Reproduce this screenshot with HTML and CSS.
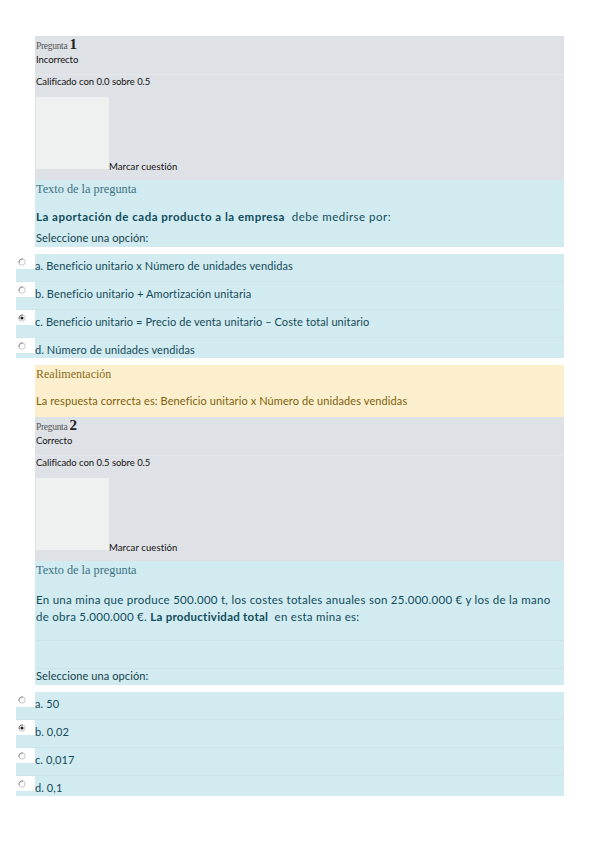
FILE: index.html
```html
<!DOCTYPE html>
<html lang="es">
<head>
<meta charset="utf-8">
<title>Cuestionario</title>
<link rel="stylesheet" href="styles.css">
</head>
<body>
<div class="page">

  <section class="info">
    <div class="qno"><span class="lbl">Pregunta</span> <span class="num">1</span></div>
    <div class="state">Incorrecto</div>
    <div class="grade">Calificado con 0.0 sobre 0.5</div>
    <div class="flag"><div class="flagbox"></div><span class="flagtxt">Marcar cuestión</span></div>
  </section>
  <section class="qtext">
    <div class="qlabel">Texto de la pregunta</div>
    <p class="question q1"><b>La aportación de cada producto a la empresa</b>&nbsp; debe medirse por:</p>
    <div class="prompt">Seleccione una opción:</div>
  </section>
  <section class="answers">
    <div class="opt"><span class="rcell"><svg class="radio" viewBox="0 0 8 8"><circle cx="4" cy="4" r="3.2" fill="#fff" stroke="#b8b8b8" stroke-width="0.8"/><path d="M1.2 5 A3.2 3.2 0 0 1 5 1.1" fill="none" stroke="#777" stroke-width="0.8"/></svg></span><span class="otext">a. Beneficio unitario x Número de unidades vendidas</span></div>
    <div class="opt"><span class="rcell"><svg class="radio" viewBox="0 0 8 8"><circle cx="4" cy="4" r="3.2" fill="#fff" stroke="#b8b8b8" stroke-width="0.8"/><path d="M1.2 5 A3.2 3.2 0 0 1 5 1.1" fill="none" stroke="#777" stroke-width="0.8"/></svg></span><span class="otext">b. Beneficio unitario + Amortización unitaria</span></div>
    <div class="opt"><span class="rcell"><svg class="radio" viewBox="0 0 8 8"><circle cx="4" cy="4" r="3.2" fill="#fff" stroke="#b8b8b8" stroke-width="0.8"/><path d="M1.2 5 A3.2 3.2 0 0 1 5 1.1" fill="none" stroke="#555" stroke-width="0.8"/><circle cx="4" cy="4" r="1.6" fill="#222"/></svg></span><span class="otext">c. Beneficio unitario = Precio de venta unitario – Coste total unitario</span></div>
    <div class="opt"><span class="rcell"><svg class="radio" viewBox="0 0 8 8"><circle cx="4" cy="4" r="3.2" fill="#fff" stroke="#b8b8b8" stroke-width="0.8"/><path d="M1.2 5 A3.2 3.2 0 0 1 5 1.1" fill="none" stroke="#777" stroke-width="0.8"/></svg></span><span class="otext">d. Número de unidades vendidas</span></div>
  </section>
  <section class="feedback">
    <div class="fblabel">Realimentación</div>
    <p class="fbtext">La respuesta correcta es: Beneficio unitario x Número de unidades vendidas</p>
  </section>

  <section class="info">
    <div class="qno"><span class="lbl">Pregunta</span> <span class="num">2</span></div>
    <div class="state">Correcto</div>
    <div class="grade">Calificado con 0.5 sobre 0.5</div>
    <div class="flag"><div class="flagbox"></div><span class="flagtxt">Marcar cuestión</span></div>
  </section>
  <section class="qtext">
    <div class="qlabel">Texto de la pregunta</div>
    <p class="question q2">En una mina que produce 500.000 t, los costes totales anuales son 25.000.000 € y los de la mano de obra 5.000.000 €. <b>La productividad total</b>&nbsp; en esta mina es:</p>
    <div class="spacer"></div>
    <div class="spacer2"></div>
    <div class="prompt">Seleccione una opción:</div>
  </section>
  <section class="answers">
    <div class="opt"><span class="rcell"><svg class="radio" viewBox="0 0 8 8"><circle cx="4" cy="4" r="3.2" fill="#fff" stroke="#b8b8b8" stroke-width="0.8"/><path d="M1.2 5 A3.2 3.2 0 0 1 5 1.1" fill="none" stroke="#777" stroke-width="0.8"/></svg></span><span class="otext">a. 50</span></div>
    <div class="opt"><span class="rcell"><svg class="radio" viewBox="0 0 8 8"><circle cx="4" cy="4" r="3.2" fill="#fff" stroke="#b8b8b8" stroke-width="0.8"/><path d="M1.2 5 A3.2 3.2 0 0 1 5 1.1" fill="none" stroke="#555" stroke-width="0.8"/><circle cx="4" cy="4" r="1.6" fill="#222"/></svg></span><span class="otext">b. 0,02</span></div>
    <div class="opt"><span class="rcell"><svg class="radio" viewBox="0 0 8 8"><circle cx="4" cy="4" r="3.2" fill="#fff" stroke="#b8b8b8" stroke-width="0.8"/><path d="M1.2 5 A3.2 3.2 0 0 1 5 1.1" fill="none" stroke="#777" stroke-width="0.8"/></svg></span><span class="otext">c. 0,017</span></div>
    <div class="opt"><span class="rcell"><svg class="radio" viewBox="0 0 8 8"><circle cx="4" cy="4" r="3.2" fill="#fff" stroke="#b8b8b8" stroke-width="0.8"/><path d="M1.2 5 A3.2 3.2 0 0 1 5 1.1" fill="none" stroke="#777" stroke-width="0.8"/></svg></span><span class="otext">d. 0,1</span></div>
  </section>

</div>
</body>
</html>
```

FILE: styles.css
```css
* { box-sizing: border-box; }
html, body { margin: 0; padding: 0; background: #ffffff; }
body { font-family: "Lato", "Open Sans", sans-serif; color: #111; }
p { margin: 0; }

.page { padding-top: 36px; }

.info {
  margin-left: 35px;
  width: 529px;
  background: #dee1e5;
  padding: 0 0 11px 1px;
}
.qno { height: 16px; line-height: 16px; font-family: "Liberation Serif", serif; color: #555; }
.qno .lbl { font-size: 9.5px; letter-spacing: -0.3px; }
.qno .num { font-size: 15px; font-weight: bold; color: #222; margin-left: -2px; }
.state { line-height: 14px; font-size: 9.5px; letter-spacing: -0.05px; border-bottom: 1px solid #e3e6ea; height: 23px; padding-top: 1px; }
.grade { font-size: 9.5px; line-height: 14px; letter-spacing: -0.05px; }
.flag { display: flex; align-items: flex-end; margin-top: 8px; }
.flagbox { width: 73px; height: 72px; background: #eff0f0; }
.flagtxt { font-size: 9.5px; line-height: 10px; letter-spacing: 0.1px; margin-bottom: -3px; }

.qtext {
  margin-left: 35px;
  width: 529px;
  background: #d2ebf0;
  padding: 1px 0 2px 1px;
  color: #0f4b5b;
}
.qlabel { font-family: "Liberation Serif", serif; font-size: 12.3px; line-height: 16px; color: #3a7180; }
.question { margin-top: 11px; font-size: 11.5px; line-height: 17px; }
.question b { font-weight: 700; }
.q1 { letter-spacing: 0.5px; }
.q2 { letter-spacing: 0.27px; padding-right: 12px; margin-top: 13px; }
.prompt { margin-top: 6px; font-size: 11px; line-height: 14px; letter-spacing: 0.1px; color: #123f4c; }
.spacer { height: 16px; border-bottom: 1px solid #cde5ea; }
.spacer2 { height: 28px; border-bottom: 1px solid #cde5ea; margin-bottom: -6px; }

.answers {
  margin-top: 7px;
  margin-left: 16px;
  width: 548px;
  background: #d2ebf0;
}
.opt { display: flex; align-items: flex-start; padding: 4px 0 8px; border-bottom: 1px solid #cfe7ec; height: 28px; }
.opt:last-child { height: 20px; padding-bottom: 0; border-bottom: none; }
.rcell { width: 19px; height: 15px; margin-top: -4px; background: #ffffff; flex: none; }
.radio { display: block; width: 8px; height: 8px; margin: 4px 0 0 2px; }
.otext { font-size: 11px; line-height: 16px; letter-spacing: 0.1px; color: #144a59; }

.feedback {
  margin-top: 7px;
  margin-left: 35px;
  width: 529px;
  background: #fcefcd;
  padding: 1px 0 0 1px;
  height: 52px;
}
.fblabel { font-family: "Liberation Serif", serif; font-size: 12px; line-height: 16px; color: #8a6d22; }
.fbtext { margin-top: 12px; font-size: 11px; line-height: 14px; letter-spacing: 0.1px; color: #7e5f0c; }
```
